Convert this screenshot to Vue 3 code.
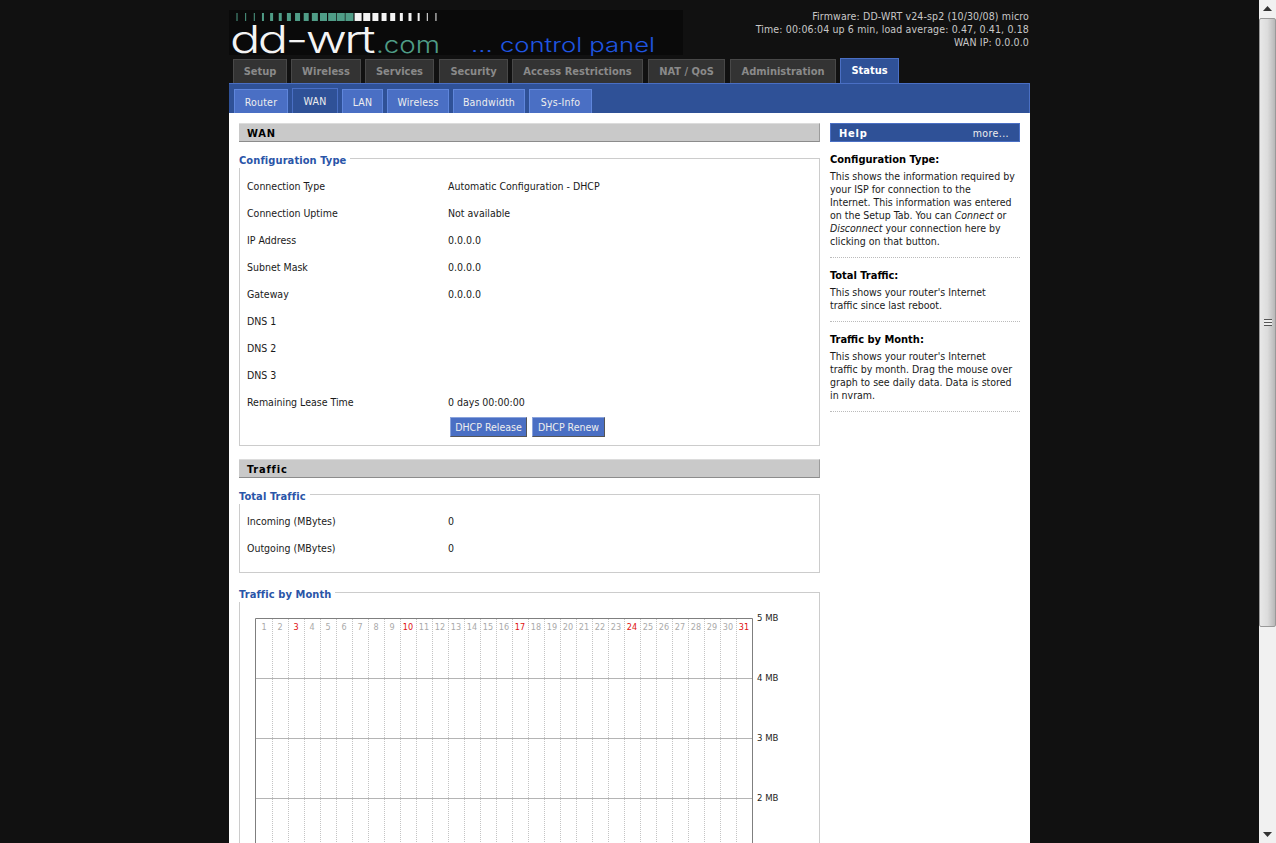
<script setup>
const tabs = [
  { label: 'Setup', w: 54, gap: 4 },
  { label: 'Wireless', w: 70, gap: 4 },
  { label: 'Services', w: 69, gap: 5 },
  { label: 'Security', w: 69, gap: 4 },
  { label: 'Access Restrictions', w: 131, gap: 5 },
  { label: 'NAT / QoS', w: 77, gap: 5 },
  { label: 'Administration', w: 106, gap: 4 },
  { label: 'Status', w: 59, gap: 0, active: true },
]
const subtabs = [
  { label: 'Router', w: 54, gap: 4 },
  { label: 'WAN', w: 46, gap: 4, active: true },
  { label: 'LAN', w: 41, gap: 4 },
  { label: 'Wireless', w: 62, gap: 4 },
  { label: 'Bandwidth', w: 72, gap: 4 },
  { label: 'Sys-Info', w: 63, gap: 0 },
]
const config = [
  ['Connection Type', 'Automatic Configuration - DHCP'],
  ['Connection Uptime', 'Not available'],
  ['IP Address', '0.0.0.0'],
  ['Subnet Mask', '0.0.0.0'],
  ['Gateway', '0.0.0.0'],
  ['DNS 1', ''],
  ['DNS 2', ''],
  ['DNS 3', ''],
  ['Remaining Lease Time', '0 days 00:00:00'],
]
const traffic = [
  ['Incoming (MBytes)', '0'],
  ['Outgoing (MBytes)', '0'],
]
const sundays = [3, 10, 17, 24, 31]
const days = Array.from({ length: 31 }, (_, i) => i + 1)
const scale = [
  { y: 0, label: '5 MB' },
  { y: 60, label: '4 MB' },
  { y: 120, label: '3 MB' },
  { y: 180, label: '2 MB' },
]
const barW = [1, 1, 1, 2, 3, 3, 4, 5, 5, 6, 7, 8, 8, 8]
const whiteW = [7, 7, 6, 5, 5, 3, 3, 2, 1, 1]
const pitch = 8.65
</script>

<template>
  <div class="window">
    <main class="page">
      <header class="masthead">
        <svg class="logo" width="454" height="45" viewBox="0 0 454 45">
          <rect width="454" height="45" fill="#0a0a0a" />
          <rect v-for="(w, i) in barW" :key="'t' + i" :x="8 + i * pitch - w / 2" y="3" :width="w" height="8" fill="#4f9c86" />
          <rect v-for="(w, i) in whiteW" :key="'w' + i" :x="8 + (i + 14) * pitch - w / 2" y="3" :width="w" height="8" fill="#f2f2f2" />
          <text class="logo-main" x="1" y="43" textLength="143" lengthAdjust="spacingAndGlyphs">dd-wrt</text>
          <text class="logo-com" x="147" y="43" textLength="64" lengthAdjust="spacingAndGlyphs">.com</text>
          <text class="logo-panel" x="242" y="42" textLength="184" lengthAdjust="spacingAndGlyphs">... control panel</text>
        </svg>
        <div class="status-info">
          <div>Firmware: DD-WRT v24-sp2 (10/30/08) micro</div>
          <div>Time: 00:06:04 up 6 min, load average: 0.47, 0.41, 0.18</div>
          <div>WAN IP: 0.0.0.0</div>
        </div>
      </header>

      <nav class="tabs">
        <a
          v-for="t in tabs"
          :key="t.label"
          class="tab"
          :class="{ active: t.active }"
          :style="{ width: t.w + 'px', marginRight: t.gap + 'px' }"
        >{{ t.label }}</a>
      </nav>

      <nav class="subtabs">
        <a
          v-for="t in subtabs"
          :key="t.label"
          class="subtab"
          :class="{ active: t.active }"
          :style="{ width: t.w + 'px', marginRight: t.gap + 'px' }"
        >{{ t.label }}</a>
      </nav>

      <div class="body">
        <section class="content">
          <h2 class="bar">WAN</h2>
          <fieldset class="set config">
            <legend>Configuration Type</legend>
            <div v-for="r in config" :key="r[0]" class="row">
              <span>{{ r[0] }}</span><span>{{ r[1] }}</span>
            </div>
            <div class="actions">
              <button type="button">DHCP Release</button>
              <button type="button">DHCP Renew</button>
            </div>
          </fieldset>

          <h2 class="bar traffic">Traffic</h2>
          <fieldset class="set totals">
            <legend>Total Traffic</legend>
            <div v-for="r in traffic" :key="r[0]" class="row">
              <span>{{ r[0] }}</span><span>{{ r[1] }}</span>
            </div>
          </fieldset>

          <fieldset class="set month">
            <legend>Traffic by Month</legend>
            <svg class="chart" width="540" height="240" viewBox="0 0 540 240">
              <line v-for="d in 30" :key="'d' + d" :x1="0.5 + d * 16 + 1" y1="1" :x2="0.5 + d * 16 + 1" y2="240" stroke="#c4c4c4" stroke-dasharray="1 1" />
              <line v-for="s in scale.slice(1)" :key="'h' + s.y" x1="1" :y1="s.y + 0.5" x2="497" :y2="s.y + 0.5" stroke="#b4b4b4" />
              <path d="M.5 240V.5H497.5V240" fill="none" stroke="#7f7f7f" />
              <text
                v-for="d in days"
                :key="'n' + d"
                class="day"
                :class="{ sunday: sundays.includes(d) }"
                :x="9 + (d - 1) * 16"
                y="12"
                text-anchor="middle"
              >{{ d }}</text>
              <text v-for="s in scale" :key="'l' + s.y" class="mb" x="502" :y="s.y + 3">{{ s.label }}</text>
            </svg>
          </fieldset>
        </section>

        <aside class="help">
          <div class="help-bar"><h2>Help</h2><a>more...</a></div>
          <div class="help-item">
            <h3>Configuration Type:</h3>
            <p>This shows the information required by<br>your ISP for connection to the<br>Internet. This information was entered<br>on the Setup Tab. You can <em>Connect</em> or<br><em>Disconnect</em> your connection here by<br>clicking on that button.</p>
          </div>
          <div class="help-item">
            <h3>Total Traffic:</h3>
            <p>This shows your router's Internet<br>traffic since last reboot.</p>
          </div>
          <div class="help-item">
            <h3>Traffic by Month:</h3>
            <p>This shows your router's Internet<br>traffic by month. Drag the mouse over<br>graph to see daily data. Data is stored<br>in nvram.</p>
          </div>
        </aside>
      </div>
    </main>

    <div class="scrollbar" aria-hidden="true">
      <div class="sb-btn"><svg width="9" height="5" viewBox="0 0 9 5"><path d="M4.5 0 9 5H0Z" fill="#333" /></svg></div>
      <div class="sb-thumb"><div class="grip"></div></div>
      <div class="sb-rest"></div>
      <div class="sb-btn"><svg width="9" height="5" viewBox="0 0 9 5"><path d="M0 0H9L4.5 5Z" fill="#333" /></svg></div>
    </div>
  </div>
</template>

<style>
html, body { margin: 0; background: #111; overflow: hidden; }
</style>

<style scoped>
.window {
  display: flex;
  height: 100vh;
  overflow: hidden;
  background: #111;
  font-family: "DejaVu Sans Condensed", "DejaVu Sans", sans-serif;
  font-stretch: condensed;
  font-size: 10.5px;
  color: #1a1a1a;
}
.page {
  width: 801px;
  margin: 0 229px;
  flex: none;
}
.masthead {
  height: 58px;
  display: flex;
  justify-content: space-between;
}
.logo { display: block; margin-top: 10px; overflow: visible; font-stretch: normal; }
.logo text { font-family: Inter, "Liberation Sans", sans-serif; font-weight: 300; }
.logo-main { font-size: 38px; letter-spacing: -2px; fill: #f4f4f4; }
.logo-com { font-size: 23px; fill: #4f9c86; }
.logo-panel { font-size: 20px; fill: #1f55e0; }
.status-info {
  padding: 10px 1px 0 0;
  text-align: right;
  line-height: 13px;
  letter-spacing: 0.14px;
  color: #c8c8c8;
}
.tabs {
  display: flex;
  align-items: flex-end;
  height: 25px;
  padding-left: 4px;
}
.tab {
  box-sizing: border-box;
  height: 24px;
  background: #333;
  border: 1px solid #484848;
  border-bottom: 0;
  color: #8a8a8a;
  font-weight: 700;
  font-size: 11px;
  line-height: 24px;
  text-align: center;
}
.tab.active {
  height: 25px;
  background: #2f5197;
  border-color: #4a6fc4;
  color: #fff;
}
.subtabs {
  display: flex;
  align-items: flex-end;
  box-sizing: border-box;
  height: 30px;
  padding-left: 5px;
  background: #2f5197;
  border-top: 1px solid #4a6fc4;
  border-right: 1px solid #4a6fc4;
}
.subtab {
  box-sizing: border-box;
  height: 24px;
  background: #4a6fc4;
  border: 1px solid #5f86dc;
  border-bottom: 0;
  color: #eee;
  letter-spacing: 0.2px;
  line-height: 25px;
  text-align: center;
}
.subtab.active {
  height: 25px;
  background: #2f5197;
  border-color: #4a6fc4;
  line-height: 25px;
}
.body {
  display: flex;
  gap: 10px;
  background: #fff;
  padding: 10px 10px 0;
}
.content { width: 581px; flex: none; }
.bar {
  box-sizing: border-box;
  height: 19px;
  margin: 0;
  padding-left: 8px;
  background: #c9c9c9;
  border-top: 1px solid #dcdcdc;
  border-bottom: 1px solid #8c8c8c;
  border-right: 1px solid #9c9c9c;
  color: #000;
  font-size: 11px;
  font-weight: 700;
  letter-spacing: 0.8px;
  line-height: 19px;
}
.bar.traffic { margin-top: 13px; }
.set {
  box-sizing: border-box;
  margin: 7px 0 0;
  padding: 0 7px;
  border: 1px solid #ccc;
  min-width: 0;
}
.set legend {
  padding: 4px 4px 0 0;
  margin-left: -8px;
  color: #2a55a8;
  font-size: 11px;
  font-weight: 700;
  letter-spacing: 0.1px;
  line-height: 15px;
}
.config { padding-top: 5px; padding-bottom: 8px; }
.totals { padding-top: 4px; padding-bottom: 10px; }
.row {
  display: grid;
  grid-template-columns: 201px 1fr;
  height: 27px;
  line-height: 27px;
}
.actions {
  display: flex;
  gap: 5px;
  padding: 1px 0 0 203px;
}
.actions button {
  box-sizing: border-box;
  height: 20px;
  padding: 0;
  width: 77px;
  background: #4a6fc4;
  border: 1px solid;
  border-color: #8aa3dc #555 #555 #8aa3dc;
  color: #eee;
  font: inherit;
  line-height: 18px;
}
.actions button + button { width: 73px; }
.month { margin-top: 10px; padding: 0 0 0 15px; }
.month legend { margin-left: -16px; }
.chart { display: block; margin-top: 16px; overflow: visible; }
.day { font-size: 9px; fill: #aaa; }
.day.sunday { fill: #e01010; }
.mb { font-size: 9.5px; fill: #222; }
.help { width: 190px; flex: none; }
.help-bar {
  box-sizing: border-box;
  height: 19px;
  display: flex;
  justify-content: space-between;
  align-items: center;
  padding: 1px 10px 0 8px;
  background: #2f5197;
  border: 1px solid #4a6fc4;
  color: #eee;
}
.help-bar a { letter-spacing: 0.4px; }
.help-bar h2 {
  margin: 0;
  font-size: 11px;
  font-weight: 700;
  letter-spacing: 0.8px;
  color: #fff;
}
.help-item {
  padding: 11px 0 9px;
  border-bottom: 1px dotted #bbb;
}
.help-item h3 {
  margin: 0 0 3px;
  font-size: 11px;
  line-height: 14px;
  font-weight: 700;
  color: #000;
}
.help-item p {
  margin: 0;
  line-height: 13px;
  color: #1a1a1a;
}
.scrollbar {
  position: fixed;
  top: 0;
  right: 0;
  bottom: 0;
  width: 17px;
  display: flex;
  flex-direction: column;
  background: #f1f1f1;
}
.sb-btn {
  height: 17px;
  flex: none;
  display: flex;
  align-items: center;
  justify-content: center;
}
.sb-thumb {
  box-sizing: border-box;
  height: 609px;
  margin: 1px 0 0;
  display: flex;
  align-items: center;
  justify-content: center;
  background: linear-gradient(90deg, #e8e8e8, #dcdcdc 50%, #b8b8b8);
  border: 1px solid #999;
  border-radius: 2px;
}
.grip {
  width: 8px;
  height: 7px;
  background: repeating-linear-gradient(180deg, #555 0 1px, #eee 1px 3px);
}
.sb-rest { flex: 1; }
</style>
